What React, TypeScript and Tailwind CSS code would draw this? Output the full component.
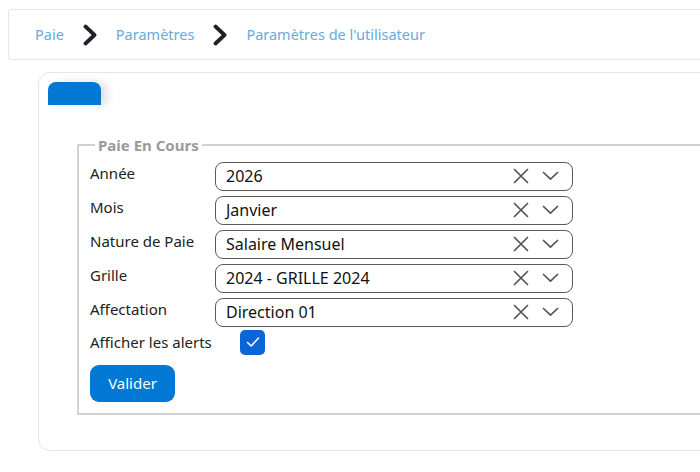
const fields = [
  { label: "Année", value: "2026" },
  { label: "Mois", value: "Janvier" },
  { label: "Nature de Paie", value: "Salaire Mensuel" },
  { label: "Grille", value: "2024 - GRILLE 2024" },
  { label: "Affectation", value: "Direction 01" },
];

function Crumb() {
  return (
    <svg width="16" height="22" viewBox="0 0 16 22" className="mx-[18px]">
      <path d="M3.5 2.5 L12.5 11 L3.5 19.5" fill="none" stroke="#1f2329" strokeWidth="3.8" strokeLinecap="round" strokeLinejoin="round" />
    </svg>
  );
}

function Select({ value }: { value: string }) {
  return (
    <div className="flex h-[29px] w-[358px] items-center rounded-[8px] border border-[#5a5a5a] pl-[10px] pr-[13px]">
      <span className="flex-1 text-[16px] text-[#111]">{value}</span>
      <svg width="16" height="16" viewBox="0 0 16 16" className="mr-[13px]">
        <path d="M1.5 1.5 L14.5 14.5 M14.5 1.5 L1.5 14.5" stroke="#555" strokeWidth="1.7" strokeLinecap="round" />
      </svg>
      <svg width="17" height="10" viewBox="0 0 17 10">
        <path d="M1.5 1.5 L8.5 8.2 L15.5 1.5" fill="none" stroke="#555" strokeWidth="1.7" strokeLinecap="round" strokeLinejoin="round" />
      </svg>
    </div>
  );
}

export default function App() {
  return (
    <div
      className="h-[472px] w-[700px] overflow-hidden bg-white"
      style={{ fontFamily: '"Noto Sans", "Open Sans", sans-serif' }}
    >
      <div className="ml-[8px] mt-[9px] flex h-[51px] w-[760px] items-center rounded-[3px] border border-[#e6e6e6] pl-[26px] text-[14.5px] text-[#6aaadc]">
        <span>Paie</span>
        <Crumb />
        <span>Paramètres</span>
        <Crumb />
        <span>Paramètres de l'utilisateur</span>
      </div>

      <div className="ml-[38px] mt-[12px] h-[379px] w-[760px] rounded-[12px] border border-[#e6e6e6] pl-[9px] pt-[9px]">
        <div className="h-[23px] w-[53px] rounded-t-[8px] bg-[#0078d4] shadow-[6px_0_8px_rgba(0,0,0,0.12)]" />

        <fieldset className="ml-[29px] mt-[29px] h-[281px] w-[720px] border-2 border-[#d2d2d2] pl-[11px] pr-0 pt-0">
          <legend className="ml-[5px] px-[3px] text-[15px] font-bold text-[#9a9a9a]">Paie En Cours</legend>
          <div className="mt-[5px] flex flex-col gap-[5px]">
            {fields.map((f) => (
              <div key={f.label} className="flex items-start">
                <span className="w-[125px] pt-[1px] text-[15px] leading-[20px] text-[#222]">{f.label}</span>
                <Select value={f.value} />
              </div>
            ))}
            <div className="mt-[-2px] flex items-center">
              <span className="w-[150px] text-[15px] text-[#222]">Afficher les alerts</span>
              <span className="flex h-[25px] w-[25px] items-center justify-center rounded-[5px] bg-[#0a66d8]">
                <svg width="16" height="16" viewBox="0 0 16 16">
                  <path d="M2.5 8.5 L6.2 12 L13.5 4" fill="none" stroke="white" strokeWidth="1.6" strokeLinecap="round" strokeLinejoin="round" />
                </svg>
              </span>
            </div>
            <button className="mt-[5px] h-[37px] w-[85px] rounded-[9px] bg-[#0078d4] text-[15px] text-white">Valider</button>
          </div>
        </fieldset>
      </div>
    </div>
  );
}
